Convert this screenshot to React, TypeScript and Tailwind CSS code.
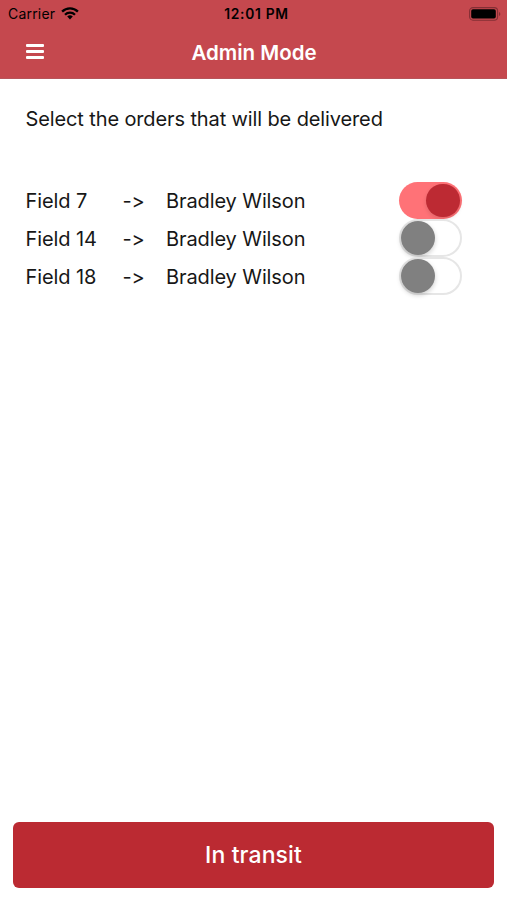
type Order = { field: string; name: string; selected: boolean };

const orders: Order[] = [
  { field: "Field 7", name: "Bradley Wilson", selected: true },
  { field: "Field 14", name: "Bradley Wilson", selected: false },
  { field: "Field 18", name: "Bradley Wilson", selected: false },
];

function StatusBar() {
  return (
    <div className="grid h-[27px] grid-cols-3 items-center pr-[6px] pl-2 text-black">
      <div className="flex items-center gap-[6px]">
        <span className="text-[14px] leading-none tracking-[0.2px]">Carrier</span>
        <svg width="18" height="13" viewBox="0 0 18 13" fill="none" stroke="currentColor" strokeWidth="2.3">
          <path d="M1.1 4.6a11.2 11.2 0 0 1 15.8 0" />
          <path d="M4 7.7a7.1 7.1 0 0 1 10 0" />
          <path d="M9 12.4 6.2 9.6a4 4 0 0 1 5.6 0Z" fill="currentColor" stroke="none" />
        </svg>
      </div>
      <span className="pt-[2px] pl-[4px] text-center text-[13.8px] leading-none font-semibold tracking-[0.7px]">12:01 PM</span>
      <svg className="justify-self-end" width="32" height="14" viewBox="0 0 32 14">
        <rect x="0.6" y="0.6" width="28" height="12.6" rx="3.4" fill="none" stroke="#842f35" strokeWidth="1.1" />
        <rect x="2.2" y="2.2" width="24.6" height="9.4" rx="1.8" fill="#000" />
        <path d="M30 5v4c1.8-.7 1.8-3.3 0-4Z" fill="#842f35" />
      </svg>
    </div>
  );
}

function Toggle({ on }: { on: boolean }) {
  return (
    <button
      role="switch"
      aria-checked={on}
      aria-label="Deliver order"
      className={
        on
          ? "flex h-[37.5px] w-[62.5px] items-center justify-end rounded-full bg-[#ff7277] pr-[2px]"
          : "flex h-[37.5px] w-[62.5px] items-center justify-start rounded-full border-2 border-[#e6e6e6] bg-white"
      }
    >
      <span
        className={
          on
            ? "size-[33.5px] rounded-full bg-[#bd2a33] shadow-[0_2px_4px_rgba(0,0,0,0.12)]"
            : "size-[33.5px] rounded-full bg-[#808080] shadow-[0_2px_5px_rgba(0,0,0,0.2)]"
        }
      />
    </button>
  );
}

export default function App() {
  return (
    <div className="flex h-[900px] w-[507px] flex-col bg-white font-['Inter','Liberation_Sans',sans-serif] text-[#171717]">
      <header className="h-[79px] border-b border-[#b8545a] bg-[#c5484e]">
        <StatusBar />
        <div className="grid h-[51px] grid-cols-[60px_1fr_60px] items-center">
          <button aria-label="Menu" className="mb-[2px] ml-[26px] flex w-[18px] flex-col gap-[3px]">
            <span className="h-[3px] rounded-[1px] bg-white" />
            <span className="h-[3px] rounded-[1px] bg-white" />
            <span className="h-[3px] rounded-[1px] bg-white" />
          </button>
          <h1 className="pt-[2px] pl-px text-center text-[20.5px] font-semibold text-white">Admin Mode</h1>
        </div>
      </header>
      <main className="flex flex-1 flex-col pt-[25px] pl-[25.5px]">
        <p className="text-[20px] leading-[30px] tracking-[-0.12px]">Select the orders that will be delivered</p>
        <ul className="mt-[47.5px]">
          {orders.map((o) => (
            <li
              key={o.field}
              className="grid h-[37.8px] grid-cols-[97px_43.5px_233.3px_63px] items-center text-[20px] tracking-[-0.1px]"
            >
              <span className="pt-[2px]">{o.field}</span>
              <span className="pt-[2px]">-&gt;</span>
              <span className="pt-[2px]">{o.name}</span>
              <Toggle on={o.selected} />
            </li>
          ))}
        </ul>
      </main>
      <footer className="px-[13px] pb-3">
        <button className="h-[66px] w-full rounded-[6px] bg-[#bb2a32] pt-px text-[23px] font-medium tracking-[0.1px] text-white">
          In transit
        </button>
      </footer>
    </div>
  );
}
